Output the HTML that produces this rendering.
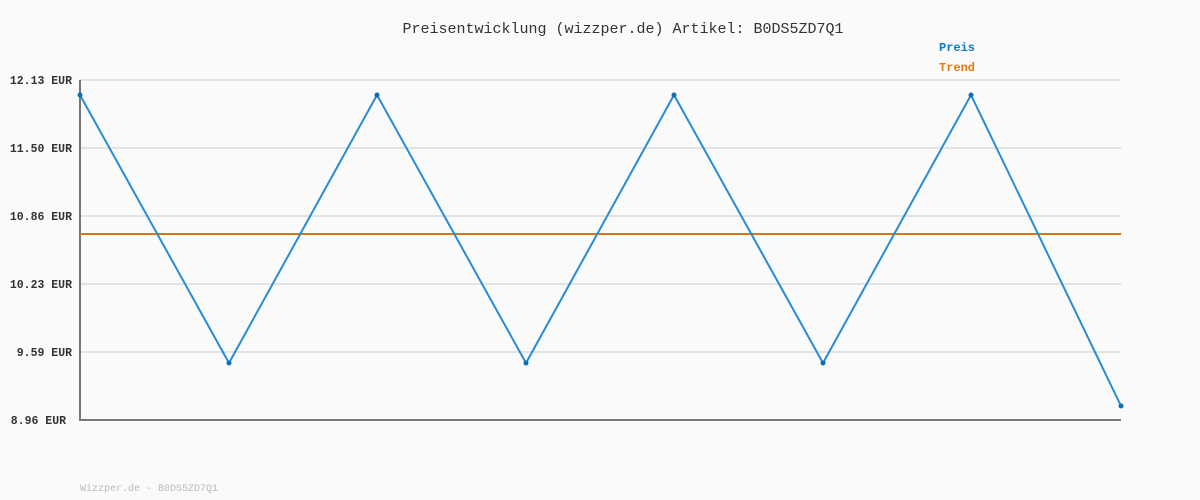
<!DOCTYPE html>
<html><head><style>body{margin:0;background:#fafafa}svg{display:block}text{font-family:"Liberation Mono","DejaVu Sans Mono",monospace}</style></head>
<body>
<svg width="1200" height="500" xmlns="http://www.w3.org/2000/svg">
<rect width="1200" height="500" fill="#fafafa"/>
<text x="623" y="33" font-size="15" text-anchor="middle" fill="#333">Preisentwicklung (wizzper.de) Artikel: B0DS5ZD7Q1</text>
<text x="939" y="51" font-size="12" font-weight="bold" fill="#0b7ac8">Preis</text>
<text x="939" y="71" font-size="12" font-weight="bold" fill="#e07b12">Trend</text>
<g stroke="#e3e3e3" stroke-width="2">
<line x1="80" y1="80" x2="1121" y2="80"/><line x1="80" y1="148" x2="1121" y2="148"/><line x1="80" y1="216" x2="1121" y2="216"/><line x1="80" y1="284" x2="1121" y2="284"/><line x1="80" y1="352" x2="1121" y2="352"/>
</g>
<g font-size="11.5" font-weight="bold" fill="#333" text-anchor="end">
<text x="72" y="84">12.13 EUR</text><text x="72" y="152">11.50 EUR</text><text x="72" y="220">10.86 EUR</text><text x="72" y="288">10.23 EUR</text><text x="72" y="356">9.59 EUR</text><text x="66" y="424">8.96 EUR</text>
</g>
<line x1="80" y1="80" x2="80" y2="420" stroke="#777" stroke-width="2"/>
<line x1="79" y1="420" x2="1121" y2="420" stroke="#777" stroke-width="2"/>
<line x1="80" y1="234" x2="1121" y2="234" stroke="#d9770f" stroke-width="2"/>
<polyline fill="none" stroke="#2b8bd3" stroke-width="2" points="80,95 229,363 377,95 526,363 674,95 823,363 971,95 1121,406"/>
<g fill="#0b6fb8">
<circle cx="80" cy="95" r="2.5"/><circle cx="229" cy="363" r="2.5"/><circle cx="377" cy="95" r="2.5"/><circle cx="526" cy="363" r="2.5"/><circle cx="674" cy="95" r="2.5"/><circle cx="823" cy="363" r="2.5"/><circle cx="971" cy="95" r="2.5"/><circle cx="1121" cy="406" r="2.5"/>
</g>
<text x="80" y="491" font-size="10" fill="#bbb">Wizzper.de - B0DS5ZD7Q1</text>
</svg>
</body></html>
